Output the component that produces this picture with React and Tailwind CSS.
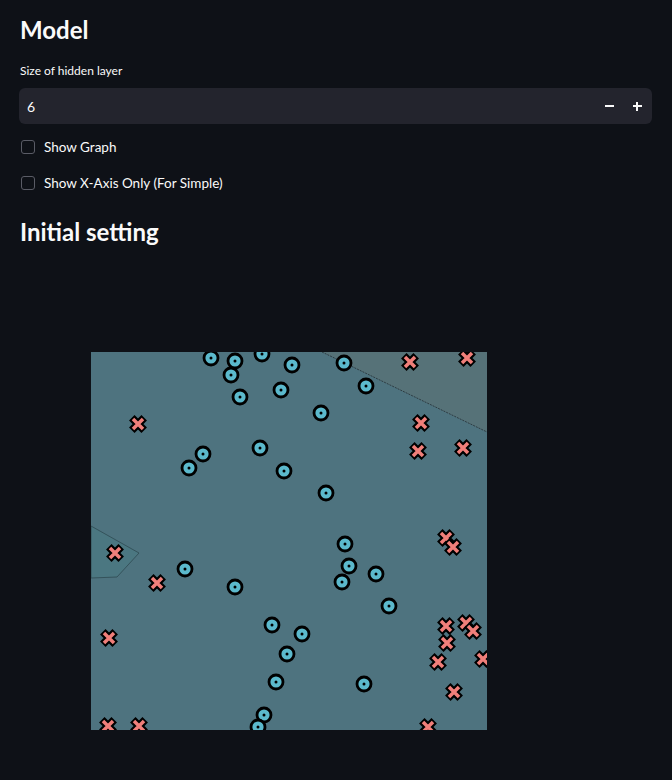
import { useState } from 'react';

const circles = [
  [211, 358], [235, 361], [262, 354], [292, 365], [231, 375], [240, 397], [281, 390],
  [344, 363], [366, 386], [321, 413], [260, 448], [203, 454], [189, 468], [284, 471],
  [326, 493], [345, 544], [349, 566], [342, 582], [376, 574], [389, 606], [185, 569],
  [235, 587], [272, 625], [302, 634], [287, 654], [276, 682], [364, 684], [264, 715],
  [258, 727],
];

const crosses = [
  [410, 362], [467, 358], [138, 424], [421, 423], [418, 451], [463, 448], [446, 538],
  [453, 547], [115, 553], [157, 583], [109, 638], [446, 626], [466, 623], [473, 631],
  [447, 643], [438, 662], [483, 659], [454, 692], [428, 727], [108, 726], [139, 726],
];

// plot origin on the page
const OX = 91;
const OY = 352;

function Plot() {
  return (
    <svg width="396" height="378" viewBox="0 0 396 378" className="block">
      <defs>
        <clipPath id="area">
          <rect x="0" y="0" width="396" height="378" />
        </clipPath>
      </defs>
      <g clipPath="url(#area)">
        <rect x="0" y="0" width="396" height="378" fill="#4e737f" />
        <polygon points="231,0 396,80 396,0" fill="#567278" />
        <line x1="231" y1="0" x2="396" y2="80" stroke="#2e3d44" strokeWidth="1" strokeDasharray="2 1" />
        <polygon points="0,174 48,201 26,225 0,226" fill="#4b7781" stroke="#2e4a52" strokeWidth="0.8" />
        {circles.map(([x, y], i) => (
          <g key={'c' + i}>
            <circle cx={x - OX} cy={y - OY} r="7" fill="#5bb9cc" stroke="#000" strokeWidth="2.8" />
            <circle cx={x - OX} cy={y - OY} r="1.5" fill="#000" />
          </g>
        ))}
        {crosses.map(([x, y], i) => {
          const cx = x - OX;
          const cy = y - OY;
          return (
            <g key={'x' + i}>
              <path d={`M${cx - 6.2} ${cy - 6.2}L${cx + 6.2} ${cy + 6.2}M${cx - 6.2} ${cy + 6.2}L${cx + 6.2} ${cy - 6.2}`} stroke="#000" strokeWidth="7.8" />
              <path d={`M${cx - 5} ${cy - 5}L${cx + 5} ${cy + 5}M${cx - 5} ${cy + 5}L${cx + 5} ${cy - 5}`} stroke="#f07f7a" strokeWidth="3.5" />
            </g>
          );
        })}
      </g>
    </svg>
  );
}

function Check({ label }) {
  const [on, setOn] = useState(false);
  return (
    <label className="flex items-center gap-[9px] h-[20px] cursor-pointer" onClick={() => setOn(!on)}>
      <span className={`w-[14px] h-[14px] rounded-[3px] border ${on ? 'bg-[#ff4b4b] border-[#ff4b4b]' : 'border-[#5a5c66]'} ml-[1px]`} />
      <span className="text-[13.5px] text-[#fafafa]">{label}</span>
    </label>
  );
}

export default function App() {
  const [val, setVal] = useState(6);
  return (
    <div className="min-h-[780px] bg-[#0e1117] text-[#fafafa] font-['Lato',sans-serif] px-[20px] pt-[14px]">
      <h2 className="text-[24px] font-bold leading-[32px]">Model</h2>
      <div className="mt-[17px] text-[12px] leading-[16px]">Size of hidden layer</div>
      <div className="mt-[9px] h-[36px] w-[633px] -ml-[1px] rounded-[6px] bg-[#23242d] flex items-center">
        <span className="flex-1 pl-[8px] text-[14px]">{val}</span>
        <button className="w-[28px] h-[36px] flex items-center justify-center" onClick={() => setVal(val - 1)}>
          <span className="block w-[9px] h-[2px] bg-[#fafafa]" />
        </button>
        <button className="w-[28px] h-[36px] mr-[1px] flex items-center justify-center relative" onClick={() => setVal(val + 1)}>
          <span className="block w-[9px] h-[2px] bg-[#fafafa]" />
          <span className="absolute block w-[2px] h-[9px] bg-[#fafafa]" />
        </button>
      </div>
      <div className="mt-[13px] flex flex-col gap-[16px]">
        <Check label="Show Graph" />
        <Check label="Show X-Axis Only (For Simple)" />
      </div>
      <h2 className="mt-[23px] text-[24px] font-bold leading-[32px]">Initial setting</h2>
      <div className="mt-[104px] ml-[71px]">
        <Plot />
      </div>
    </div>
  );
}
